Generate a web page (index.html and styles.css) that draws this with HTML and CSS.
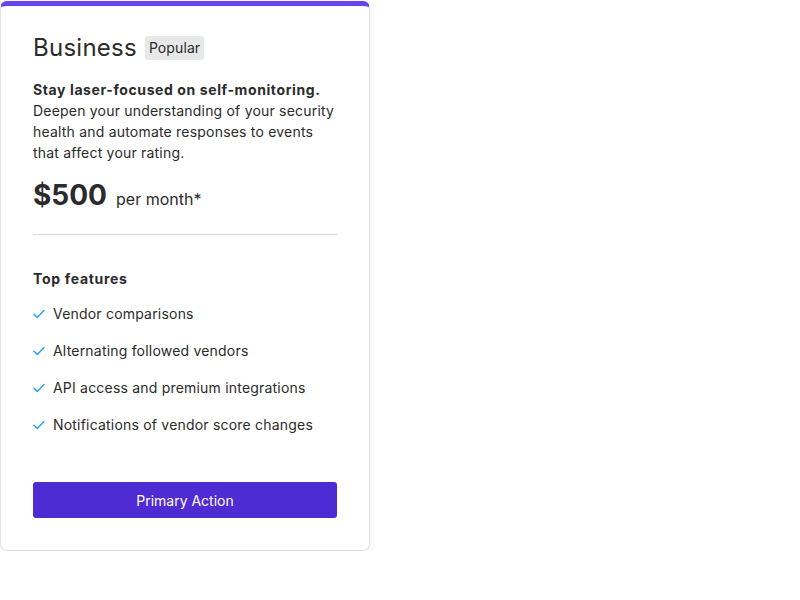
FILE: index.html
```html
<!DOCTYPE html>
<html>
<head>
<meta charset="utf-8">
<link rel="stylesheet" href="styles.css">
</head>
<body>
<div class="card">
  <div class="title-row">
    <h2 class="title">Business</h2>
    <span class="badge">Popular</span>
  </div>
  <p class="desc"><strong>Stay laser-focused on self-monitoring.</strong> Deepen your understanding of your security health and automate responses to events that affect your rating.</p>
  <div class="price"><span class="amount">$500</span><span class="period">per month*</span></div>
  <hr class="divider">
  <h3 class="features-title">Top features</h3>
  <ul class="features">
    <li><svg class="check" viewBox="0 0 12 10" width="12" height="10"><path d="M1 5.2l3.3 3.2L11 1.5" fill="none" stroke="#2ea1f2" stroke-width="1.5" stroke-linecap="round" stroke-linejoin="round"/></svg>Vendor comparisons</li>
    <li><svg class="check" viewBox="0 0 12 10" width="12" height="10"><path d="M1 5.2l3.3 3.2L11 1.5" fill="none" stroke="#2ea1f2" stroke-width="1.5" stroke-linecap="round" stroke-linejoin="round"/></svg>Alternating followed vendors</li>
    <li><svg class="check" viewBox="0 0 12 10" width="12" height="10"><path d="M1 5.2l3.3 3.2L11 1.5" fill="none" stroke="#2ea1f2" stroke-width="1.5" stroke-linecap="round" stroke-linejoin="round"/></svg>API access and premium integrations</li>
    <li><svg class="check" viewBox="0 0 12 10" width="12" height="10"><path d="M1 5.2l3.3 3.2L11 1.5" fill="none" stroke="#2ea1f2" stroke-width="1.5" stroke-linecap="round" stroke-linejoin="round"/></svg>Notifications of vendor score changes</li>
  </ul>
  <button class="action">Primary Action</button>
</div>
</body>
</html>
```
FILE: styles.css
```css
* { box-sizing: border-box; }
html, body { margin: 0; padding: 0; background: #fff; }
body {
  padding-top: 1px;
  font-family: Inter, "Noto Sans", sans-serif;
  color: #2b2b2b;
}
.card {
  width: 370px;
  background: #fff;
  border: 1px solid #e3e3e3;
  border-top: 5px solid #6644f0;
  border-radius: 7px;
  box-shadow: 0 2px 8px rgba(0,0,0,0.07);
  padding: 26px 32px 32px 32px;
  display: flex;
  flex-direction: column;
}
.title-row {
  display: flex;
  align-items: center;
  gap: 8px;
  height: 32px;
}
.title {
  margin: 0;
  font-size: 24px;
  font-weight: 400;
  line-height: 32px;
  letter-spacing: 0.25px;
  color: #2b2b2b;
}
.badge {
  background: #e8e8e8;
  border-radius: 3px;
  font-size: 14px;
  line-height: 24px;
  height: 24px;
  padding: 0 4px;
  letter-spacing: 0.1px;
  color: #2b2b2b;
}
.desc {
  margin: 15px 0 0 0;
  font-size: 14px;
  line-height: 21px;
  letter-spacing: 0.2px;
}
.desc strong { font-weight: 700; letter-spacing: 0.6px; }
.price {
  margin-top: 14px;
  height: 36px;
  line-height: 36px;
  font-size: 16px;
  white-space: nowrap;
}
.amount {
  font-size: 28px;
  font-weight: 700;
  line-height: 36px;
}
.period {
  font-size: 16px;
  line-height: 1;
  margin-left: 9px;
}
.divider {
  border: 0;
  border-top: 1px solid #d6d6d6;
  margin: 21px 0 0 0;
  height: 0;
}
.features-title {
  margin: 34px 0 0 0;
  font-size: 14px;
  font-weight: 700;
  line-height: 20px;
  letter-spacing: 0.7px;
}
.features {
  list-style: none;
  margin: 15px 0 0 0;
  padding: 0;
  display: flex;
  flex-direction: column;
  gap: 17px;
}
.features li {
  display: flex;
  align-items: center;
  gap: 8px;
  font-size: 14px;
  line-height: 20px;
  letter-spacing: 0.2px;
}
.check { flex: none; }
.action {
  margin-top: 47px;
  height: 36px;
  width: 100%;
  border: 0;
  border-radius: 3px;
  background: #4f2bd4;
  color: #fff;
  font-family: Inter, "Noto Sans", sans-serif;
  font-size: 14px;
}
```
